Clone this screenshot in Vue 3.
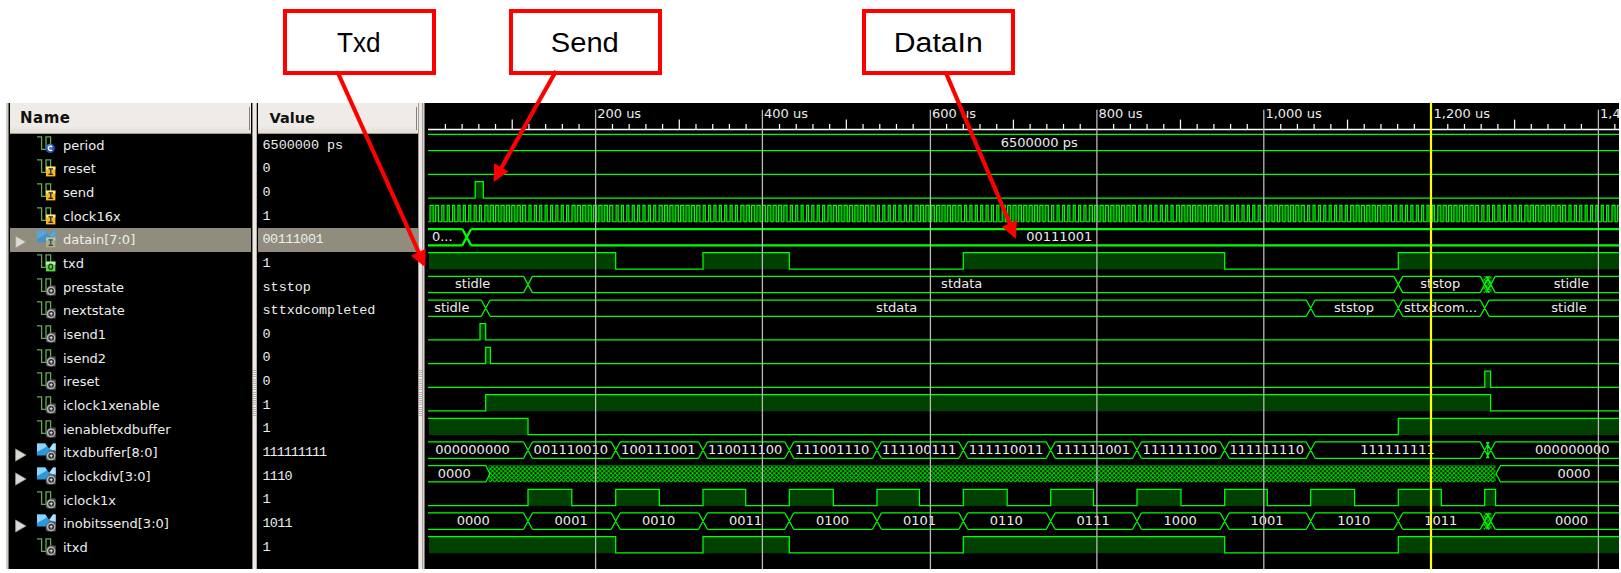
<script setup>
const PITCH = 23.66
const TOP = 133.5

const signals = [
  { name: 'period', value: '6500000 ps', kind: 'const' },
  { name: 'reset', value: '0', kind: 'in' },
  { name: 'send', value: '0', kind: 'in' },
  { name: 'clock16x', value: '1', kind: 'in' },
  { name: 'datain[7:0]', value: '00111001', kind: 'in', bus: true, selected: true },
  { name: 'txd', value: '1', kind: 'out' },
  { name: 'presstate', value: 'ststop', kind: 'sig' },
  { name: 'nextstate', value: 'sttxdcompleted', kind: 'sig' },
  { name: 'isend1', value: '0', kind: 'sig' },
  { name: 'isend2', value: '0', kind: 'sig' },
  { name: 'ireset', value: '0', kind: 'sig' },
  { name: 'iclock1xenable', value: '1', kind: 'sig' },
  { name: 'ienabletxdbuffer', value: '1', kind: 'sig' },
  { name: 'itxdbuffer[8:0]', value: '111111111', kind: 'sig', bus: true },
  { name: 'iclockdiv[3:0]', value: '1110', kind: 'sig', bus: true },
  { name: 'iclock1x', value: '1', kind: 'sig' },
  { name: 'inobitssend[3:0]', value: '1011', kind: 'sig', bus: true },
  { name: 'itxd', value: '1', kind: 'sig' },
]

const spacing = (v) => {
  const ones = v.split('').filter((c) => c === '1').length
  return { letterSpacing: (v.length > 1 ? -ones / v.length : 0) + 'px' }
}

const hi = (r) => TOP + r * PITCH + 0.9
const lo = (r) => TOP + r * PITCH + 17.2
const X0 = 428
const X1 = 1625
const bits = [528, 615.7, 703, 789.3, 877, 963.3, 1050.7, 1137, 1224.7, 1310.7, 1398.3, 1484.7]
const falls = [571.8, 659.3, 745.7, 833.3, 919.5, 1007.2, 1093.5, 1181, 1267.3, 1354.6, 1441.3, 1495.6]

const snap = (x) => 595.6 + Math.round((x - 595.6) / 1.0755) * 1.0755
const clock = []
for (let k = 0; k < 222; k++) {
  const a = 430.4 + k * 5.445
  clock.push([snap(a), snap(a + 2.72)])
}

const serial = [[X0 + 1, 615.7], [703, 789.3], [963.3, 1224.7], [1398.3, X1]]
const logic = [
  { r: 1, p: [] },
  { r: 2, p: [[475.2, 483.3]] },
  { r: 3, p: clock },
  { r: 5, p: serial },
  { r: 8, p: [[480, 485.7]] },
  { r: 9, p: [[485.7, 490.4]] },
  { r: 10, p: [[1484.8, 1490.6]] },
  { r: 11, p: [[485.7, 1490.6]] },
  { r: 12, p: [[X0 + 1, 528], [1398.3, X1]] },
  { r: 15, p: bits.map((b, i) => [b, falls[i]]) },
  { r: 17, p: serial },
].map(({ r, p }) => {
  let d = ''
  let started = false
  for (const [a, b] of p) {
    if (!started && a === X0 + 1) d += `M${X0} ${hi(r)}`
    else d += `${started ? '' : `M${X0} ${lo(r)}`}H${a}V${hi(r)}`
    started = true
    d += `H${b}`
    if (b !== X1) d += `V${lo(r)}`
  }
  if (!started) d = `M${X0} ${lo(r)}`
  d += `H${X1}`
  return { r, d, fills: p.map(([a, b]) => ({ x: a, w: b - a, y: hi(r), h: 16.6 })) }
})

const W = 4.4
const busPath = (r, xs, from = X0, to = X1) => {
  let d = ''
  let x = from
  for (const c of [...xs, null]) {
    const end = c === null ? to : c - W
    if (end > x) d += `M${x} ${hi(r)}H${end}M${x} ${lo(r)}H${end}`
    if (c !== null) {
      d += `M${c - W} ${hi(r)}L${c + W} ${lo(r)}M${c - W} ${lo(r)}L${c + W} ${hi(r)}`
      x = c + W
    }
  }
  return d
}
const mid = (r) => (hi(r) + lo(r)) / 2
const buses = [
  { r: 0, d: busPath(0, []) },
  { r: 4, d: busPath(4, [466.7]), thick: true },
  { r: 6, d: busPath(6, [528, 1398.3, 1484.7, 1490.8]) },
  { r: 7, d: busPath(7, [485.7, 1310.7, 1398.3, 1484.7]) },
  { r: 13, d: busPath(13, [...bits.filter((b) => b !== 1398.3), 1490.8]) + `M1487.8 ${hi(13)}V${lo(13)}` },
  {
    r: 14,
    d:
      `M${X0} ${hi(14)}H485.8L490 ${mid(14)}L485.8 ${lo(14)}H${X0}` +
      `M${X1} ${hi(14)}H1500.5L1496 ${mid(14)}L1500.5 ${lo(14)}H${X1}`,
  },
  { r: 16, d: busPath(16, [...bits, 1490.8]) },
]

const hatches = [
  { r: 6, x: 1483.5, w: 8 },
  { r: 14, x: 488.5, w: 1007 },
  { r: 16, x: 1483.5, w: 8 },
]

const centre = (i) => (bits[i] + bits[i + 1]) / 2
const words = ['001110010', '100111001', '110011100', '111001110', '111100111', '111110011', '111111001', '111111100', '111111110']
const counts = ['0001', '0010', '0011', '0100', '0101', '0110', '0111', '1000', '1001', '1010', '1011']
const labels = [
  { r: 0, x: 1039.2, t: '6500000 ps' },
  { r: 4, x: 442.3, t: '0...' },
  { r: 4, x: 1059.3, t: '00111001' },
  { r: 6, x: 472.7, t: 'stidle' },
  { r: 6, x: 961.7, t: 'stdata' },
  { r: 6, x: 1440.3, t: 'ststop' },
  { r: 6, x: 1571.3, t: 'stidle' },
  { r: 7, x: 451.8, t: 'stidle' },
  { r: 7, x: 896.7, t: 'stdata' },
  { r: 7, x: 1354, t: 'ststop' },
  { r: 7, x: 1440.6, t: 'sttxdcom...' },
  { r: 7, x: 1569, t: 'stidle' },
  { r: 13, x: 472.5, t: '000000000' },
  ...words.map((t, i) => ({ r: 13, x: centre(i) - 1, t })),
  { r: 13, x: 1397.5, t: '111111111' },
  { r: 13, x: 1572.3, t: '000000000' },
  { r: 14, x: 454.2, t: '0000' },
  { r: 14, x: 1574, t: '0000' },
  { r: 16, x: 473.2, t: '0000' },
  ...counts.map((t, i) => ({ r: 16, x: centre(i) - 0.7, t })),
  { r: 16, x: 1571.5, t: '0000' },
]

const ticks = []
for (let k = 1; k < 72; k++) {
  const x = 428.7 + k * 16.706
  if (k % 10) ticks.push({ x, y: k % 5 ? 124 : 119.6 })
}
const majors = [
  { x: 595.6, t: '200 us' },
  { x: 762.4, t: '400 us' },
  { x: 930.4, t: '600 us' },
  { x: 1096.9, t: '800 us' },
  { x: 1263.8, t: '1,000 us' },
  { x: 1431, t: '1,200 us', cursor: true },
  { x: 1598.4, t: '1,4' },
]

const callouts = [
  { x: 283, t: 'Txd', tx: 337, w: 43.5, line: 'M338 73L419 253', head: '425,267 411,255.7 425.7,248.7' },
  { x: 509, t: 'Send', tx: 550.8, w: 68, line: 'M556 71L501 168.5', head: '493.6,182 494.2,163.3 508.5,171.6' },
  { x: 862, t: 'DataIn', tx: 893.8, w: 89, line: 'M946 73L1010.5 225', head: '1015.8,238.7 1001.8,226.7 1017,220.3' },
]
</script>

<template>
  <main class="screen">
    <section class="viewer">
      <div class="edge"></div>
      <div class="panel names">
        <header class="head wide">Name</header>
        <div v-for="s in signals" :key="s.name" class="row" :class="{ selected: s.selected }">
          <svg class="twist" width="12" height="14" viewBox="0 0 12 14">
            <path v-if="s.bus" d="M.6 1L11 7L.6 13Z" fill="#dcdad5" stroke="#9a9894" stroke-width=".8" />
          </svg>
          <svg class="icon" width="19" height="19" viewBox="0 0 19 19">
            <template v-if="s.bus">
              <path d="M0 .5H8.3L12 5.5L16 .5H18.7V12.5H0Z" :fill="s.selected ? '#4791c4' : '#2b97dc'" />
              <path d="M0 .5H8.3L10 3.4L0 9Z" :fill="s.selected ? '#5aa5d5' : '#8ed3f9'" />
              <path d="M18.7 .5H16L12.5 6L18.7 8Z" :fill="s.selected ? '#5aa5d5' : '#b4e2fa'" />
            </template>
            <path v-else d="M0 .8H4.6V13.4H9V.8H13.6V8" fill="none" stroke="#66ab54" stroke-width="1.3" />
            <g v-if="s.kind === 'in'" :opacity="s.selected ? 0.65 : 1">
              <rect x="9" y="7.6" width="9.4" height="9.8" :fill="s.selected ? '#c9bd78' : '#f7b91c'" />
              <rect x="9" y="7.6" width="9.4" height="3" fill="#ffe48a" />
              <path d="M11.5 9.8H16M13.75 9.8V15.4M11.5 15.4H16" stroke="#1b2440" stroke-width="1.3" />
            </g>
            <g v-else-if="s.kind === 'out'">
              <rect x="9" y="7.6" width="9.4" height="9.8" fill="#5fd14f" />
              <rect x="9" y="7.6" width="9.4" height="3" fill="#b8f0ad" />
              <ellipse cx="13.7" cy="12.7" rx="1.9" ry="2.6" fill="none" stroke="#123c10" stroke-width="1.2" />
            </g>
            <g v-else-if="s.kind === 'const'">
              <circle cx="13.2" cy="12.4" r="4.7" fill="#1f4fb0" />
              <circle cx="12.6" cy="11" r="3" fill="#4a78cc" />
              <path d="M15.2 10.9A2.2 2.2 0 1 0 15.2 13.9" fill="none" stroke="#fff" stroke-width="1.3" />
            </g>
            <g v-else>
              <path d="M8.8 11.5L12.5 7.6H18.7V17.6H10.5L8.8 16Z" fill="#555" />
              <circle cx="14" cy="12.8" r="4.4" fill="#b5b5b5" />
              <circle cx="14.2" cy="12.8" r="2.9" fill="#2c2c2c" />
              <path d="M14.2 11.2V14.4M12.6 12.8H15.8" stroke="#ddd" stroke-width="1.1" />
            </g>
          </svg>
          <span class="name">{{ s.name }}</span>
        </div>
      </div>
      <div class="splitter"><i class="grip"></i></div>
      <div class="panel values">
        <header class="head">Value</header>
        <div v-for="s in signals" :key="s.name" class="row" :class="{ selected: s.selected }">
          <span class="value" :style="spacing(s.value)">{{ s.value }}</span>
        </div>
      </div>
      <div class="splitter last"><i class="grip"></i></div>

      <svg class="wave" width="1194" height="466" viewBox="425 103 1194 466">
        <defs>
          <pattern id="hatch" width="4.302" height="4.302" patternUnits="userSpaceOnUse">
            <path d="M0 0L4.302 4.302M4.302 0L0 4.302" stroke="#00e800" stroke-width="1" />
          </pattern>
        </defs>
        <path class="axis" d="M428 129.5H1621" />
        <path v-for="t in ticks" :key="t.x" class="tick" :d="`M${t.x} ${t.y}V129.5`" />
        <g v-for="l in logic" :key="l.r">
          <rect v-for="(f, i) in l.fills" :key="i" class="fill" :class="{ clk: l.r === 3 }" :x="f.x" :y="f.y" :width="f.w" :height="f.h" />
          <path class="line" :class="{ fine: l.r === 3 }" :d="l.d" />
        </g>
        <rect v-for="h in hatches" :key="h.r" :x="h.x" :y="hi(h.r) - 0.4" :width="h.w" height="17" fill="url(#hatch)" />
        <path v-for="b in buses" :key="b.r" class="line" :class="{ thick: b.thick }" :d="b.d" />
        <text v-for="(l, i) in labels" :key="i" class="label" text-anchor="middle" :x="l.x" :y="TOP + l.r * PITCH + 13">{{ l.t }}</text>
        <g v-for="m in majors" :key="m.t">
          <path v-if="!m.cursor" class="grid" :d="`M${m.x} 109.7V569`" />
          <text class="label" :x="m.x + (m.cursor ? 2.6 : 1.6)" y="118.4">{{ m.t }}</text>
        </g>
        <path class="cursor" d="M1431 103V569" />
      </svg>
    </section>

    <svg class="callouts" width="1621" height="573" viewBox="0 0 1621 573">
      <g v-for="c in callouts" :key="c.t">
        <rect :x="c.x + 2" y="11" width="149" height="62" fill="#fff" stroke="#f00" stroke-width="4" />
        <path :d="c.line" stroke="#f00" stroke-width="4.2" />
        <polygon :points="c.head" fill="#f00" />
        <text class="callout" :x="c.tx" y="52" :textLength="c.w" lengthAdjust="spacingAndGlyphs">{{ c.t }}</text>
      </g>
    </svg>
  </main>
</template>

<style>
body {
  margin: 0;
  background: #fff;
}
</style>

<style scoped>
.screen {
  position: relative;
  width: 1621px;
  height: 573px;
  overflow: hidden;
  background: #fff;
  box-sizing: border-box;
  padding: 103px 2px 0 6px;
}
.viewer {
  display: flex;
  height: 466px;
  background: #000;
}
.edge {
  width: 3px;
  background: linear-gradient(90deg, #cfccc8 0 2px, #77756f 2px);
}
.panel {
  box-sizing: border-box;
  overflow: hidden;
}
.names {
  width: 243px;
  padding: 0 1px;
}
.values {
  width: 161px;
  padding-left: 1px;
}
.head {
  position: relative;
  box-sizing: border-box;
  height: 30.5px;
  padding-left: 11.5px;
  border-bottom: 1.4px solid #a09c92;
  background: linear-gradient(#efebe7 75%, #e2dcd4);
  color: #111;
  font: bold 14.5px/30px "DejaVu Sans", sans-serif;
}
.wide {
  padding-left: 10px;
  font-size: 15px;
  letter-spacing: 0.5px;
}
.head::after {
  content: '';
  position: absolute;
  right: 1px;
  top: 4px;
  width: 1.5px;
  height: 23px;
  background: #85827d;
}
.row {
  display: flex;
  align-items: center;
  height: 23.66px;
  color: #eee;
}
.selected {
  background: #918d7e;
}
.twist {
  flex: none;
  margin: 4px 10px 0 4.5px;
}
.icon {
  flex: none;
  margin-right: 7.5px;
}
.name {
  font: 13px/20px "DejaVu Sans", sans-serif;
  padding-top: 1px;
}
.value {
  padding: 0.5px 0 0 4.5px;
  font: 13.45px/20px "Liberation Mono", monospace;
  white-space: pre;
}
.splitter {
  display: flex;
  align-items: center;
  width: 5px;
  background: linear-gradient(90deg, #8e8b86 0 1px, #efe9e5 1px 4px, #b5aeaa 4px);
}
.last {
  width: 7px;
  background: linear-gradient(90deg, #a39e9a 0 1px, #eee8e4 1px 4px, #a8a29e 4px 5px, #d9d3cf 5px 6px, #77736f 6px);
}
.grip {
  width: 3px;
  height: 47px;
  margin: 115px 0 0 1px;
  background: repeating-linear-gradient(#b8b2ae 0 1px, #f4f0ee 1px 2.15px);
}
.wave {
  flex: none;
}
.axis {
  stroke: #fff;
  stroke-width: 1.5;
}
.tick {
  stroke: #f4f4f4;
  stroke-width: 1.25;
}
.fill {
  fill: #004000;
}
.clk {
  fill: #006000;
}
.line {
  fill: none;
  stroke: #00ff00;
  stroke-width: 1.25;
}
.fine {
  stroke-width: 1.1;
}
.thick {
  stroke-width: 2.3;
}
.grid {
  stroke: #b8b8b8;
  stroke-width: 1.3;
}
.cursor {
  stroke: #ff0;
  stroke-width: 2.2;
}
.label {
  fill: #ececec;
  font: 13px "DejaVu Sans", sans-serif;
}
.callouts {
  position: absolute;
  left: 0;
  top: 0;
}
.callout {
  fill: #000;
  font: 27px "Liberation Sans", Arial, sans-serif;
}
</style>
